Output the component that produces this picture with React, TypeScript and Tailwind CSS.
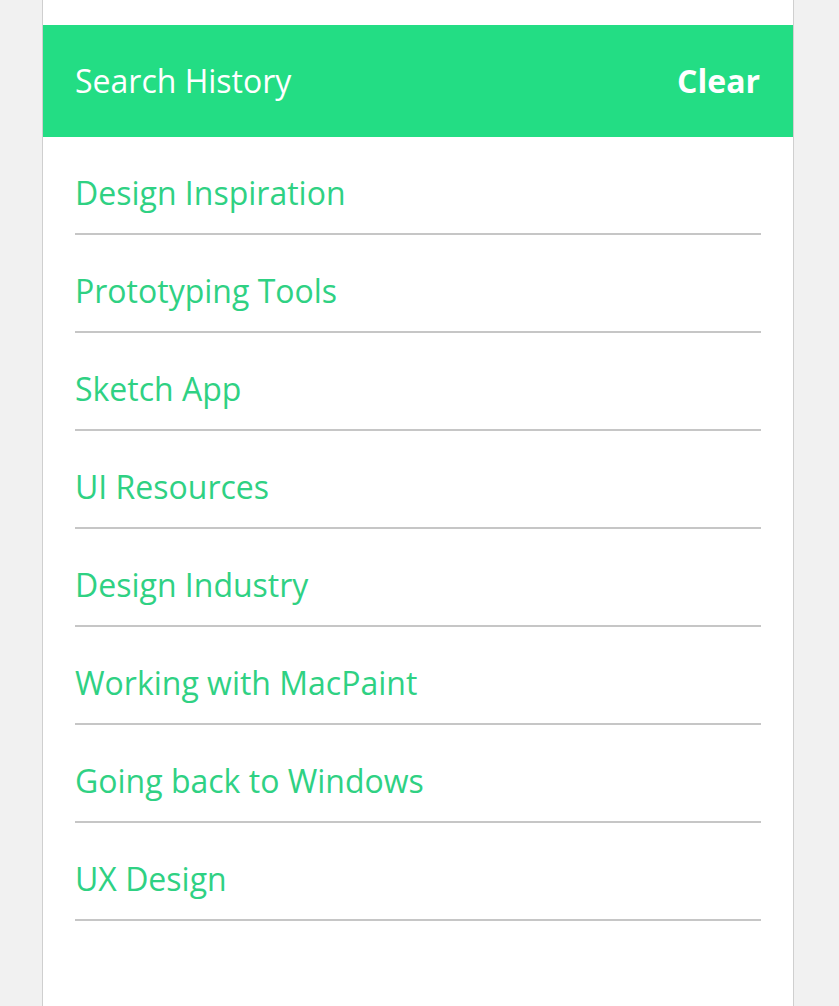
import React from 'react';

const items = [
  'Design Inspiration',
  'Prototyping Tools',
  'Sketch App',
  'UI Resources',
  'Design Industry',
  'Working with MacPaint',
  'Going back to Windows',
  'UX Design',
];

export default function App() {
  return (
    <div
      className="min-h-screen w-full bg-[#f1f1f1]"
      style={{ fontFamily: '"Open Sans", "Noto Sans", sans-serif' }}
    >
      <div className="ml-[42px] w-[752px] min-h-[1006px] bg-white border-x border-[#cfcfcf] pt-[25px] pb-[80px]">
        <div className="h-[112px] bg-[#23dd84] flex items-center justify-between pl-8 pr-[33px]">
          <span className="text-white text-[32px]">Search History</span>
          <button className="text-white text-[32px] font-bold">Clear</button>
        </div>
        <ul className="pl-8 pr-[32px]">
          {items.map((item) => (
            <li
              key={item}
              className="border-b-2 border-[#c6c6c6] pt-[34px] pb-[18px] text-[32px] leading-[44px] text-[#2fd183]"
            >
              {item}
            </li>
          ))}
        </ul>
      </div>
    </div>
  );
}
